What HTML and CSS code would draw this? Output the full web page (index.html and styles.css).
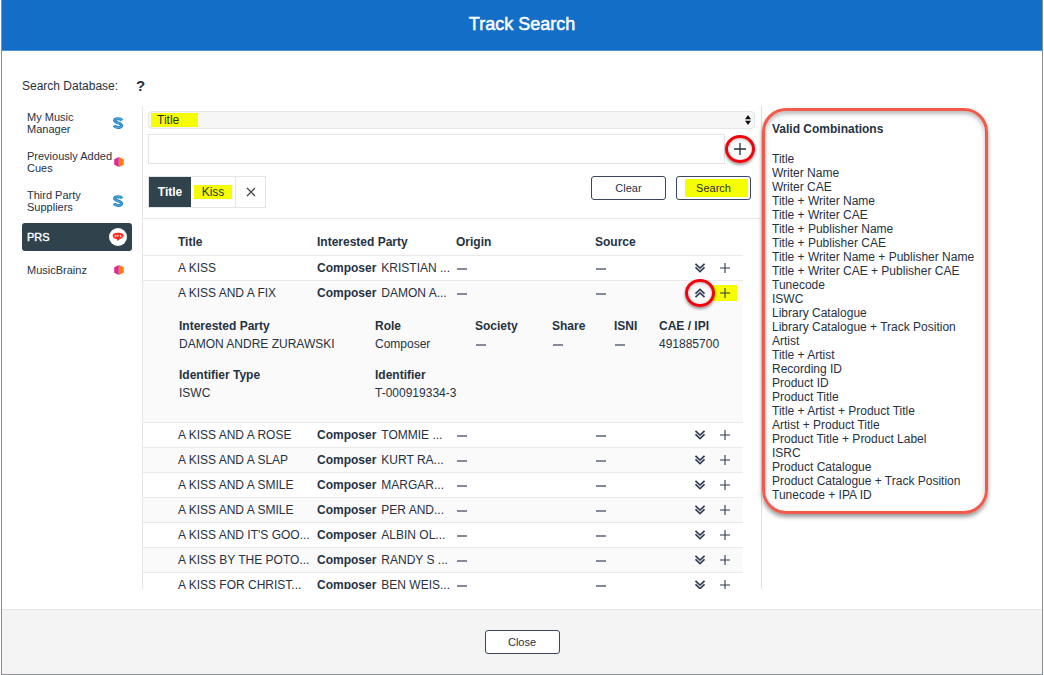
FILE: index.html
```
<!DOCTYPE html>
<html lang="en">
<head>
  <meta charset="UTF-8">
  <title>Track Search</title>
  <link rel="stylesheet" href="styles.css">
</head>
<body>
  <svg class="sprite" aria-hidden="true">
    <symbol id="icon-plus" viewBox="0 0 10 10">
      <path d="M5 0v10M0 5h10" fill="none" stroke="currentColor" stroke-width="1.100"/>
    </symbol>
    <symbol id="icon-down" viewBox="0 0 10 10">
      <path d="M.5 .8 5 5 9.500 .8M.5 4.300 5 8.700 9.500 4.300" fill="none" stroke="currentColor" stroke-width="1.600"/>
      <path d="M1 2.500 5 6.800 9 2.500" fill="none" stroke="currentColor" stroke-width="1" opacity=".3"/>
    </symbol>
    <symbol id="icon-up" viewBox="0 0 10 10">
      <path d="M.5 5.700 5 1.300 9.500 5.700M.5 9.200 5 5 9.500 9.200" fill="none" stroke="currentColor" stroke-width="1.600"/>
      <path d="M1 7.500 5 3.200 9 7.500" fill="none" stroke="currentColor" stroke-width="1" opacity=".3"/>
    </symbol>
    <symbol id="icon-s" viewBox="0 0 12 12">
      <path d="M10 3.400C8.800 1.200 2.600 1 2.500 3.600c0 2.500 7.100 2.200 7.100 4.900 0 2.800-6.200 2.600-7.600.1" fill="none" stroke="#2585c9" stroke-width="3"/>
      <path d="M10 3.400C8.800 1.200 2.600 1 2.500 3.600c0 2.500 7.100 2.200 7.100 4.900 0 2.800-6.200 2.600-7.600.1" fill="none" stroke="#8cc6ea" stroke-width=".6"/>
    </symbol>
    <symbol id="icon-hex" viewBox="0 0 10 10">
      <path d="M4.800 0v10L.2 7.700V2.300z" fill="#dc2c8c"/>
      <path d="M5 0v10l4.700-2.300V2.300z" fill="#ff7a0e"/>
    </symbol>
    <symbol id="icon-prs" viewBox="0 0 18 18">
      <circle cx="9" cy="9" r="9" fill="#fff"/>
      <path d="M3.700 7.800c0-2.200 2.400-3 5.600-3s5.500 1 5.300 2.700c-.2 2.200-2.600 2.900-6.200 5.500l-.4-1.700C5.500 11 3.700 9.800 3.700 7.800z" fill="#f02d1d"/>
      <path d="M6 9V7.300h1.300v.9H6M8.500 9V7.300h1.200M12.300 7.200H11v.8h1.200v.8h-1.300" fill="none" stroke="#fff" stroke-width=".6"/>
    </symbol>
  </svg>

  <div class="dialog">
    <header class="dialog-header">
      <h1>Track Search</h1>
    </header>

    <main class="dialog-body">
      <div class="database-label">
        <span>Search Database:</span>
        <button class="help" type="button" aria-label="Help">?</button>
      </div>

      <div class="columns">
        <nav class="databases">
          <button type="button"><span>My Music Manager</span><svg class="logo-s"><use href="#icon-s"/></svg></button>
          <button type="button"><span>Previously Added Cues</span><svg class="logo-hex"><use href="#icon-hex"/></svg></button>
          <button type="button"><span>Third Party Suppliers</span><svg class="logo-s"><use href="#icon-s"/></svg></button>
          <button type="button" class="active"><span>PRS</span><svg class="logo-prs"><use href="#icon-prs"/></svg></button>
          <button type="button"><span>MusicBrainz</span><svg class="logo-hex"><use href="#icon-hex"/></svg></button>
        </nav>

        <section class="search">
          <form class="search-form">
            <div class="field-select">
              <select aria-label="Search field">
                <option>Title</option>
              </select>
              <svg viewBox="0 0 6 10"><path d="M3 0l3 4.300H0zM3 10l3-4.300H0z" fill="#111"/></svg>
            </div>
            <div class="term-row">
              <input type="text" aria-label="Search term">
              <button type="button" class="icon-button ringed" aria-label="Add term"><svg class="plus-large"><use href="#icon-plus"/></svg></button>
            </div>
            <div class="form-actions">
              <div class="tag">
                <span class="tag-field">Title</span>
                <span class="tag-value"><mark>Kiss</mark></span>
                <button type="button" aria-label="Remove"><svg viewBox="0 0 10 10"><path d="M1 1l8 8M9 1L1 9" fill="none" stroke="#444" stroke-width="1.200"/></svg></button>
              </div>
              <div class="buttons">
                <button type="button" class="button">Clear</button>
                <button type="button" class="button"><mark>Search</mark></button>
              </div>
            </div>
          </form>

          <div class="results">
            <table class="tracks">
              <colgroup>
                <col class="col-title"><col class="col-party"><col class="col-origin"><col class="col-source"><col class="col-actions">
              </colgroup>
              <thead>
                <tr><th>Title</th><th>Interested Party</th><th>Origin</th><th>Source</th><th></th></tr>
              </thead>
              <tbody id="tracks"></tbody>
            </table>
          </div>
        </section>

        <aside class="combinations">
          <h2>Valid Combinations</h2>
          <ul>
            <li>Title</li>
            <li>Writer Name</li>
            <li>Writer CAE</li>
            <li>Title + Writer Name</li>
            <li>Title + Writer CAE</li>
            <li>Title + Publisher Name</li>
            <li>Title + Publisher CAE</li>
            <li>Title + Writer Name + Publisher Name</li>
            <li>Title + Writer CAE + Publisher CAE</li>
            <li>Tunecode</li>
            <li>ISWC</li>
            <li>Library Catalogue</li>
            <li>Library Catalogue + Track Position</li>
            <li>Artist</li>
            <li>Title + Artist</li>
            <li>Recording ID</li>
            <li>Product ID</li>
            <li>Product Title</li>
            <li>Title + Artist + Product Title</li>
            <li>Artist + Product Title</li>
            <li>Product Title + Product Label</li>
            <li>ISRC</li>
            <li>Product Catalogue</li>
            <li>Product Catalogue + Track Position</li>
            <li>Tunecode + IPA ID</li>
          </ul>
        </aside>
      </div>
    </main>

    <footer class="dialog-footer">
      <button type="button" class="button">Close</button>
    </footer>
  </div>

  <template id="details">
    <tr class="details">
      <td colspan="5">
        <table>
          <colgroup>
            <col class="d-name"><col class="d-role"><col class="d-society"><col class="d-share"><col class="d-isni"><col>
          </colgroup>
          <tr><th>Interested Party</th><th>Role</th><th>Society</th><th>Share</th><th>ISNI</th><th>CAE / IPI</th></tr>
          <tr><td>DAMON ANDRE ZURAWSKI</td><td>Composer</td><td><i class="dash"></i></td><td><i class="dash"></i></td><td><i class="dash"></i></td><td>491885700</td></tr>
        </table>
        <table>
          <colgroup><col class="d-name"><col></colgroup>
          <tr><th>Identifier Type</th><th>Identifier</th></tr>
          <tr><td>ISWC</td><td>T-000919334-3</td></tr>
        </table>
      </td>
    </tr>
  </template>

  <script src="script.js"></script>
</body>
</html>
```

FILE: styles.css
```
*,
*::after {
  box-sizing: border-box;
}

body {
  margin: 0;
  background: #fff;
  color: #26323f;
  font-family: "Liberation Sans", Arial, sans-serif;
  font-size: 12px;
  line-height: 14px;
}

button,
input,
select {
  font: inherit;
  color: inherit;
}

button {
  padding: 0;
  border: none;
  background: none;
  cursor: pointer;
}

mark {
  background: #f6ff00;
  color: inherit;
}

.sprite {
  display: none;
}

.dialog {
  display: flex;
  flex-direction: column;
  height: 100vh;
  margin: 0 1px;
  border: 1px solid #8b9296;
  border-top: none;
}

/* header */
.dialog-header {
  padding: 14px 0 15px;
  background: #126ec6;
  border-bottom: 1px solid #4a90d2;
  color: #fff;
  text-align: center;
}

.dialog-header h1 {
  margin: 0;
  font-size: 18px;
  line-height: 21px;
  font-weight: normal;
  -webkit-text-stroke: 0.5px #fff;
}

/* body */
.dialog-body {
  flex: 1;
  min-height: 0;
  display: flex;
  flex-direction: column;
  padding: 28px 20px 20px;
}

.database-label {
  display: flex;
  align-items: center;
  gap: 18px;
  margin-bottom: 13px;
}

.help {
  font-size: 15px;
  line-height: 14px;
  font-weight: bold;
}

.columns {
  flex: 1;
  min-height: 0;
  display: flex;
  align-items: stretch;
}

/* database list */
.databases {
  width: 110px;
  margin-right: 10px;
  display: flex;
  flex-direction: column;
  gap: 5px;
}

.databases button {
  display: flex;
  align-items: center;
  justify-content: space-between;
  min-height: 28px;
  padding: 5px 5px 5px 5px;
  border-radius: 3px;
  font-size: 11px;
  line-height: 12px;
  text-align: left;
}

.databases svg {
  flex: none;
}

.databases .active {
  background: #30434d;
  color: #fff;
  -webkit-text-stroke: 0.4px #fff;
}

.logo-s {
  width: 12px;
  height: 12px;
  margin-right: 3px;
}

.logo-hex {
  width: 10px;
  height: 10px;
  margin-right: 3px;
}

.logo-prs {
  width: 18px;
  height: 18px;
}

/* search */
.search {
  flex: 1;
  min-width: 0;
  display: flex;
  flex-direction: column;
  border-left: 1px solid #e6e6e6;
  border-right: 1px solid #e0e0e0;
}

.search-form {
  padding: 5px 6px 10px 5px;
  border-bottom: 1px solid #e8e8e8;
}

.field-select {
  position: relative;
  margin-bottom: 5px;
}

.field-select select {
  display: block;
  width: 100%;
  height: 18px;
  padding: 0 8px;
  border: 1px solid #e6e6e6;
  border-radius: 4px;
  appearance: none;
  background: #f6f6f6 linear-gradient(#f6ff00, #f6ff00) 2px 1px / 47px 14px no-repeat;
}

.field-select svg {
  position: absolute;
  top: 4px;
  right: 4px;
  width: 6px;
  height: 10px;
  pointer-events: none;
}

.term-row {
  display: flex;
  margin-bottom: 12px;
}

.term-row input {
  flex: 1;
  height: 30px;
  border: 1px solid #e4e4e4;
}

.term-row .icon-button {
  width: 30px;
}

.form-actions {
  display: flex;
  justify-content: space-between;
}

.tag {
  display: flex;
  height: 32px;
  border: 1px solid #e4e4e4;
}

.tag > * {
  display: flex;
  align-items: center;
  justify-content: center;
}

.tag-field {
  width: 42px;
  background: #30434d;
  color: #fff;
  font-weight: bold;
}

.tag-value {
  width: 44px;
}

.tag-value mark {
  padding: 0 8px;
}

.tag button {
  width: 30px;
  border-left: 1px solid #e4e4e4;
}

.tag svg {
  width: 10px;
  height: 10px;
}

.buttons {
  display: flex;
  align-items: flex-start;
  gap: 10px;
  margin-right: 4px;
}

.button {
  width: 75px;
  height: 24px;
  border: 1px solid #3b4660;
  border-radius: 3px;
  background: #fff;
  font-size: 11px;
}

.button mark {
  display: block;
  margin: 0 2px 0 8px;
  padding: 2px 8px 2px 2px;
}

/* results */
.results {
  flex: 1;
  min-height: 0;
  margin-right: 18px;
  overflow: hidden;
}

table {
  width: 100%;
  border-collapse: collapse;
  table-layout: fixed;
}

th,
td {
  padding: 0;
  text-align: left;
  white-space: nowrap;
}

.col-title {
  width: 174px;
}

.col-party,
.col-origin {
  width: 139px;
}

.col-actions {
  width: 56px;
}

.tracks > thead th {
  height: 36px;
  padding-top: 10px;
}

.tracks > thead th:first-child,
.track td:first-child {
  padding-left: 35px;
}

.track {
  height: 25px;
  border-top: 1px solid #e9e9e9;
}

.track.shaded,
.details {
  background: #fafafa;
}

.track b {
  margin-right: 5px;
}

.dash {
  display: inline-block;
  width: 10px;
  height: 2px;
  margin-left: 1px;
  background: #838b9b;
  vertical-align: 2px;
}

.actions {
  display: flex;
  align-items: center;
  color: #2f3952;
}

.icon-button {
  position: relative;
  display: flex;
  align-items: center;
  justify-content: center;
}

.actions .icon-button {
  width: 25px;
  height: 16px;
}

.icon-button svg {
  width: 10px;
  height: 10px;
}

.icon-button .plus-large {
  width: 12px;
  height: 12px;
}

.highlighted {
  background: #f6ff00;
}

/* red ring around a control */
.ringed::after {
  content: "";
  position: absolute;
  top: 50%;
  left: 50%;
  width: 30px;
  height: 28px;
  transform: translate(-50%, -50%);
  border: 3px solid #f5000c;
  border-radius: 50%;
  box-shadow: 0 2px 3px #0006, 0 1px 3px #0004 inset;
}

.ringed {
  z-index: 1;
}

/* expanded track */
.details > td {
  height: 117px;
  padding: 12px 0 0 36px;
  vertical-align: top;
}

.details table {
  margin-bottom: 13px;
}

.details th,
.details table td {
  height: 18px;
}

.d-name {
  width: 196px;
}

.d-role {
  width: 100px;
}

.d-society {
  width: 77px;
}

.d-share {
  width: 62px;
}

.d-isni {
  width: 45px;
}

/* valid combinations */
.combinations {
  align-self: flex-start;
  width: 226px;
  margin: 2px 34px 0 0;
  padding: 11px 7px 9px;
  border: 3px solid #f25a4b;
  border-radius: 24px;
  box-shadow: 0 3px 4px #0006, 0 3px 4px #0004 inset;
  white-space: nowrap;
}

.combinations h2 {
  margin: 0 0 16px;
  font-size: 12px;
}

.combinations ul {
  margin: 0;
  padding: 0;
  list-style: none;
}

/* footer */
.dialog-footer {
  display: flex;
  justify-content: center;
  padding: 20px 0;
  background: #f4f4f4;
  border-top: 1px solid #e6e6e6;
}
```

FILE: script.js
```
const tracks = [
  { title: 'A KISS', party: 'KRISTIAN ...' },
  { title: 'A KISS AND A FIX', party: 'DAMON A...', open: true },
  { title: 'A KISS AND A ROSE', party: 'TOMMIE ...' },
  { title: 'A KISS AND A SLAP', party: 'KURT RA...' },
  { title: 'A KISS AND A SMILE', party: 'MARGAR...' },
  { title: 'A KISS AND A SMILE', party: 'PER AND...' },
  { title: "A KISS AND IT'S GOO...", party: 'ALBIN OL...' },
  { title: 'A KISS BY THE POTO...', party: 'RANDY S ...' },
  { title: 'A KISS FOR CHRIST...', party: 'BEN WEIS...' }
];

const body = document.getElementById('tracks');
const details = document.getElementById('details');

tracks.forEach((track, i) => {
  const row = document.createElement('tr');
  row.className = i % 2 ? 'track shaded' : 'track';
  row.innerHTML = `
    <td>${track.title}</td>
    <td><b>Composer</b>${track.party}</td>
    <td><i class="dash"></i></td>
    <td><i class="dash"></i></td>
    <td><div class="actions">
      <button type="button" class="icon-button ${track.open ? 'ringed' : ''}" aria-label="Details"><svg><use href="#icon-${track.open ? 'up' : 'down'}"/></svg></button>
      <button type="button" class="icon-button ${track.open ? 'highlighted' : ''}" aria-label="Add track"><svg><use href="#icon-plus"/></svg></button>
    </div></td>`;
  body.appendChild(row);

  // Open tracks get their detail row right below
  if (track.open) {
    body.appendChild(details.content.cloneNode(true));
  }
});
```
